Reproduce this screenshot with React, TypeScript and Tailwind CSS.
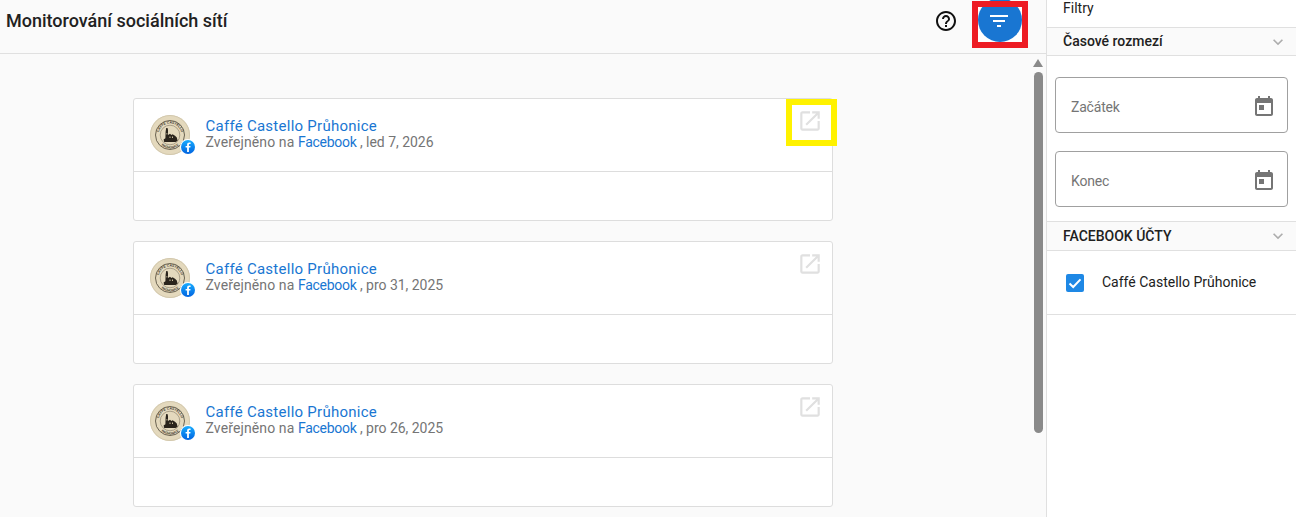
const PATHS = {
  help: "M11 18h2v-2h-2v2zm1-16C6.48 2 2 6.48 2 12s4.48 10 10 10 10-4.48 10-10S17.52 2 12 2zm0 18c-4.41 0-8-3.59-8-8s3.59-8 8-8 8 3.59 8 8-3.59 8-8 8zm0-14c-2.21 0-4 1.79-4 4h2c0-1.1.9-2 2-2s2 .9 2 2c0 2-3 1.75-3 5h2c0-2.25 3-2.5 3-5 0-2.21-1.79-4-4-4z",
  filter: "M10 18h4v-2h-4v2zM3 6v2h18V6H3zm3 7h12v-2H6v2z",
  open: "M19 19H5V5h7V3H5c-1.11 0-2 .9-2 2v14c0 1.1.89 2 2 2h14c1.1 0 2-.9 2-2v-7h-2v7zM14 3v2h3.59l-9.83 9.83 1.41 1.41L19 6.41V10h2V3h-7z",
  today: "M19 3h-1V1h-2v2H8V1H6v2H5c-1.11 0-1.99.9-1.99 2L3 19c0 1.1.89 2 2 2h14c1.1 0 2-.9 2-2V5c0-1.1-.9-2-2-2zm0 16H5V8h14v11zM7 10h5v5H7z",
  chevron: "M7.41 8.59 12 13.17l4.59-4.58L18 10l-6 6-6-6z",
};

function Icon({ d, className }: { d: string; className: string }) {
  return (
    <svg viewBox="0 0 24 24" className={className} fill="currentColor">
      <path d={d} />
    </svg>
  );
}

function Avatar() {
  return (
    <div className="relative w-[40px] h-[40px] shrink-0">
      <svg viewBox="0 0 40 40" className="w-[40px] h-[40px]">
        <defs>
          <path id="ringTop" d="M8.5 20a11.5 11.5 0 0 1 23 0" />
          <path id="ringBottom" d="M6.5 20a13.5 13.5 0 0 0 27 0" />
        </defs>
        <circle cx="20" cy="20" r="20" fill="#e4d9bd" />
        <circle cx="20" cy="20" r="19.5" fill="none" stroke="#d2c8ae" />
        <circle cx="20" cy="20" r="14.5" fill="none" stroke="#4a4234" strokeWidth="0.8" />
        <circle cx="20" cy="20" r="9.8" fill="none" stroke="#6e6553" strokeWidth="0.5" />
        <text fontSize="3.4" fill="#3a3328" fontFamily="'Liberation Sans', sans-serif" fontWeight="700">
          <textPath href="#ringTop" startOffset="50%" textAnchor="middle">CAFFÉ CASTELLO</textPath>
        </text>
        <text fontSize="3.2" fill="#3a3328" fontFamily="'Liberation Sans', sans-serif" fontWeight="700">
          <textPath href="#ringBottom" startOffset="50%" textAnchor="middle">PRŮHONICE</textPath>
        </text>
        <path d="M16.2 13h1.3l.5 2v5l2-1.2 1.4 1.2 1.2-.8 2.4 1.6 1.8 1.6.8 3.4-2 1.2H14.2l-.6-2.4 1.8-1.4.2-6.4z" fill="#2a241c" />
        <path d="M19.5 21.5h1v1.5h-1zM22 21.5h1v1.5h-1zM16.5 18h.8v1.5h-.8z" fill="#cbbf9f" />
      </svg>
      <svg viewBox="0 0 16 16" className="absolute left-[30px] top-[24px] w-[16px] h-[16px]">
        <defs>
          <linearGradient id="fbg" x1="0" y1="0" x2="0" y2="1">
            <stop offset="0" stopColor="#18acfe" />
            <stop offset="1" stopColor="#0163e0" />
          </linearGradient>
        </defs>
        <circle cx="8" cy="8" r="8" fill="#fff" />
        <circle cx="8" cy="8" r="7" fill="url(#fbg)" />
        <path d="M8.9 13V8.6h1.4l.25-1.7H8.9V5.9c0-.5.2-.85.9-.85h.8V3.6c-.3 0-.8-.1-1.3-.1-1.4 0-2.2.8-2.2 2.2v1.2H5.6v1.7h1.5V13z" fill="#fff" />
      </svg>
    </div>
  );
}

function PostCard({ date, highlighted }: { date: string; highlighted?: boolean }) {
  return (
    <div className="relative w-[700px] h-[123px] bg-white border border-[#dddddd] rounded-[3px] shrink-0 flex flex-col">
      <div className="h-[73px] border-b border-[#dddddd] flex items-start pl-[16px] pt-[16px] gap-[16px]">
        <Avatar />
        <div className="flex flex-col pt-[3px] -ml-[0.5px]">
          <span className="text-[15px] leading-[16px] text-[#1976d2] tracking-[0.26px]">Caffé Castello Průhonice</span>
          <span className="text-[14px] leading-[16px] text-[#757575] tracking-[-0.03px]">
            <span className="tracking-[0.12px]">Zveřejněno na </span>
            <span className="text-[#1976d2] tracking-[-0.3px]">Facebook</span> , {date}
          </span>
        </div>
      </div>
      <Icon d={PATHS.open} className="absolute left-[663px] top-[9px] w-[26px] h-[26px] text-[#e0e0e0]" />
      {highlighted && (
        <div className="absolute left-[652px] top-0 w-[51px] h-[47px] border-[6px] border-[#fff200]" />
      )}
    </div>
  );
}

function DateField({ label }: { label: string }) {
  return (
    <div className="h-[56px] w-[233px] border border-[#a0a0a0] rounded-[4px] flex items-center justify-between pl-[15px] pr-[11px]">
      <span className="text-[14px] text-[#757575] tracking-[-0.2px] pt-[4px]">{label}</span>
      <Icon d={PATHS.today} className="w-[24px] h-[24px] text-[#757575] mt-[3px]" />
    </div>
  );
}

function SectionHead({ title, className }: { title: string; className: string }) {
  return (
    <div className={`flex items-center justify-between bg-[#fafafa] border-y border-[#e0e0e0] pl-[16px] pr-[8px] ${className}`}>
      <span className="text-[14px] font-medium text-[#212121]">{title}</span>
      <Icon d={PATHS.chevron} className="w-[20px] h-[20px] text-[#adadad]" />
    </div>
  );
}

export default function App() {
  return (
    <div className="flex w-[1296px] h-[517px] overflow-hidden bg-white font-['Roboto',sans-serif]">
      <main className="w-[1046px] h-full flex flex-col bg-[#fafafa]">
        <header className="h-[54px] shrink-0 border-b border-[#e0e0e0] flex items-start pl-[6px]">
          <h1 className="flex-1 text-[18px] font-medium leading-[22px] pt-[10px] text-[#212121]">
            Monitorování sociálních sítí
          </h1>
          <Icon d={PATHS.help} className="mt-[9px] w-[24px] h-[24px] text-[#111111]" />
          <div className="relative w-[56px] h-[47px] mt-[1px] ml-[14px] mr-[18px] bg-white">
            <div className="absolute left-[6px] top-[-3px] w-[44px] h-[44px] rounded-full bg-[#1976d2] flex items-center justify-center">
              <Icon d={PATHS.filter} className="w-[24px] h-[24px] text-white mr-[3px] mt-[2px]" />
            </div>
            <div className="absolute inset-0 border-[6px] border-[#ed1c24]" />
          </div>
        </header>
        <div className="flex-1 min-h-0 flex">
          <div className="flex-1 min-w-0 overflow-hidden flex flex-col gap-[20px] pl-[133px] pt-[44px]">
            <PostCard date="led 7, 2026" highlighted />
            <PostCard date="pro 31, 2025" />
            <PostCard date="pro 26, 2025" />
          </div>
          <div className="w-[14px] shrink-0 flex flex-col items-center pt-[5px] pr-[2px]">
            <div className="w-0 h-0 border-x-[5px] border-x-transparent border-b-[8px] border-b-[#8a8a8a]" />
            <div className="w-[9px] h-[361px] mt-[5px] rounded-full bg-[#8a8a8a]" />
          </div>
        </div>
      </main>
      <aside className="w-[250px] h-full border-l border-[#e0e0e0] flex flex-col bg-white">
        <div className="h-[27px] pl-[16px] text-[14px] leading-[16px] text-[#212121]">Filtry</div>
        <SectionHead title="Časové rozmezí" className="h-[29px]" />
        <div className="flex flex-col gap-[18px] pl-[8px] pt-[21px] pb-[14px]">
          <DateField label="Začátek" />
          <DateField label="Konec" />
        </div>
        <SectionHead title="FACEBOOK ÚČTY" className="h-[30px]" />
        <div className="h-[64px] border-b border-[#e0e0e0] flex items-center pl-[19px] gap-[18px]">
          <div className="w-[18px] h-[18px] rounded-[2px] bg-[#1e88e5] flex items-center justify-center">
            <svg viewBox="0 0 18 18" className="w-[18px] h-[18px]">
              <path d="M3.5 9.5 7.2 13l7.3-7.6" fill="none" stroke="#fff" strokeWidth="2" />
            </svg>
          </div>
          <span className="text-[14px] text-[#212121]">Caffé Castello Průhonice</span>
        </div>
      </aside>
    </div>
  );
}
